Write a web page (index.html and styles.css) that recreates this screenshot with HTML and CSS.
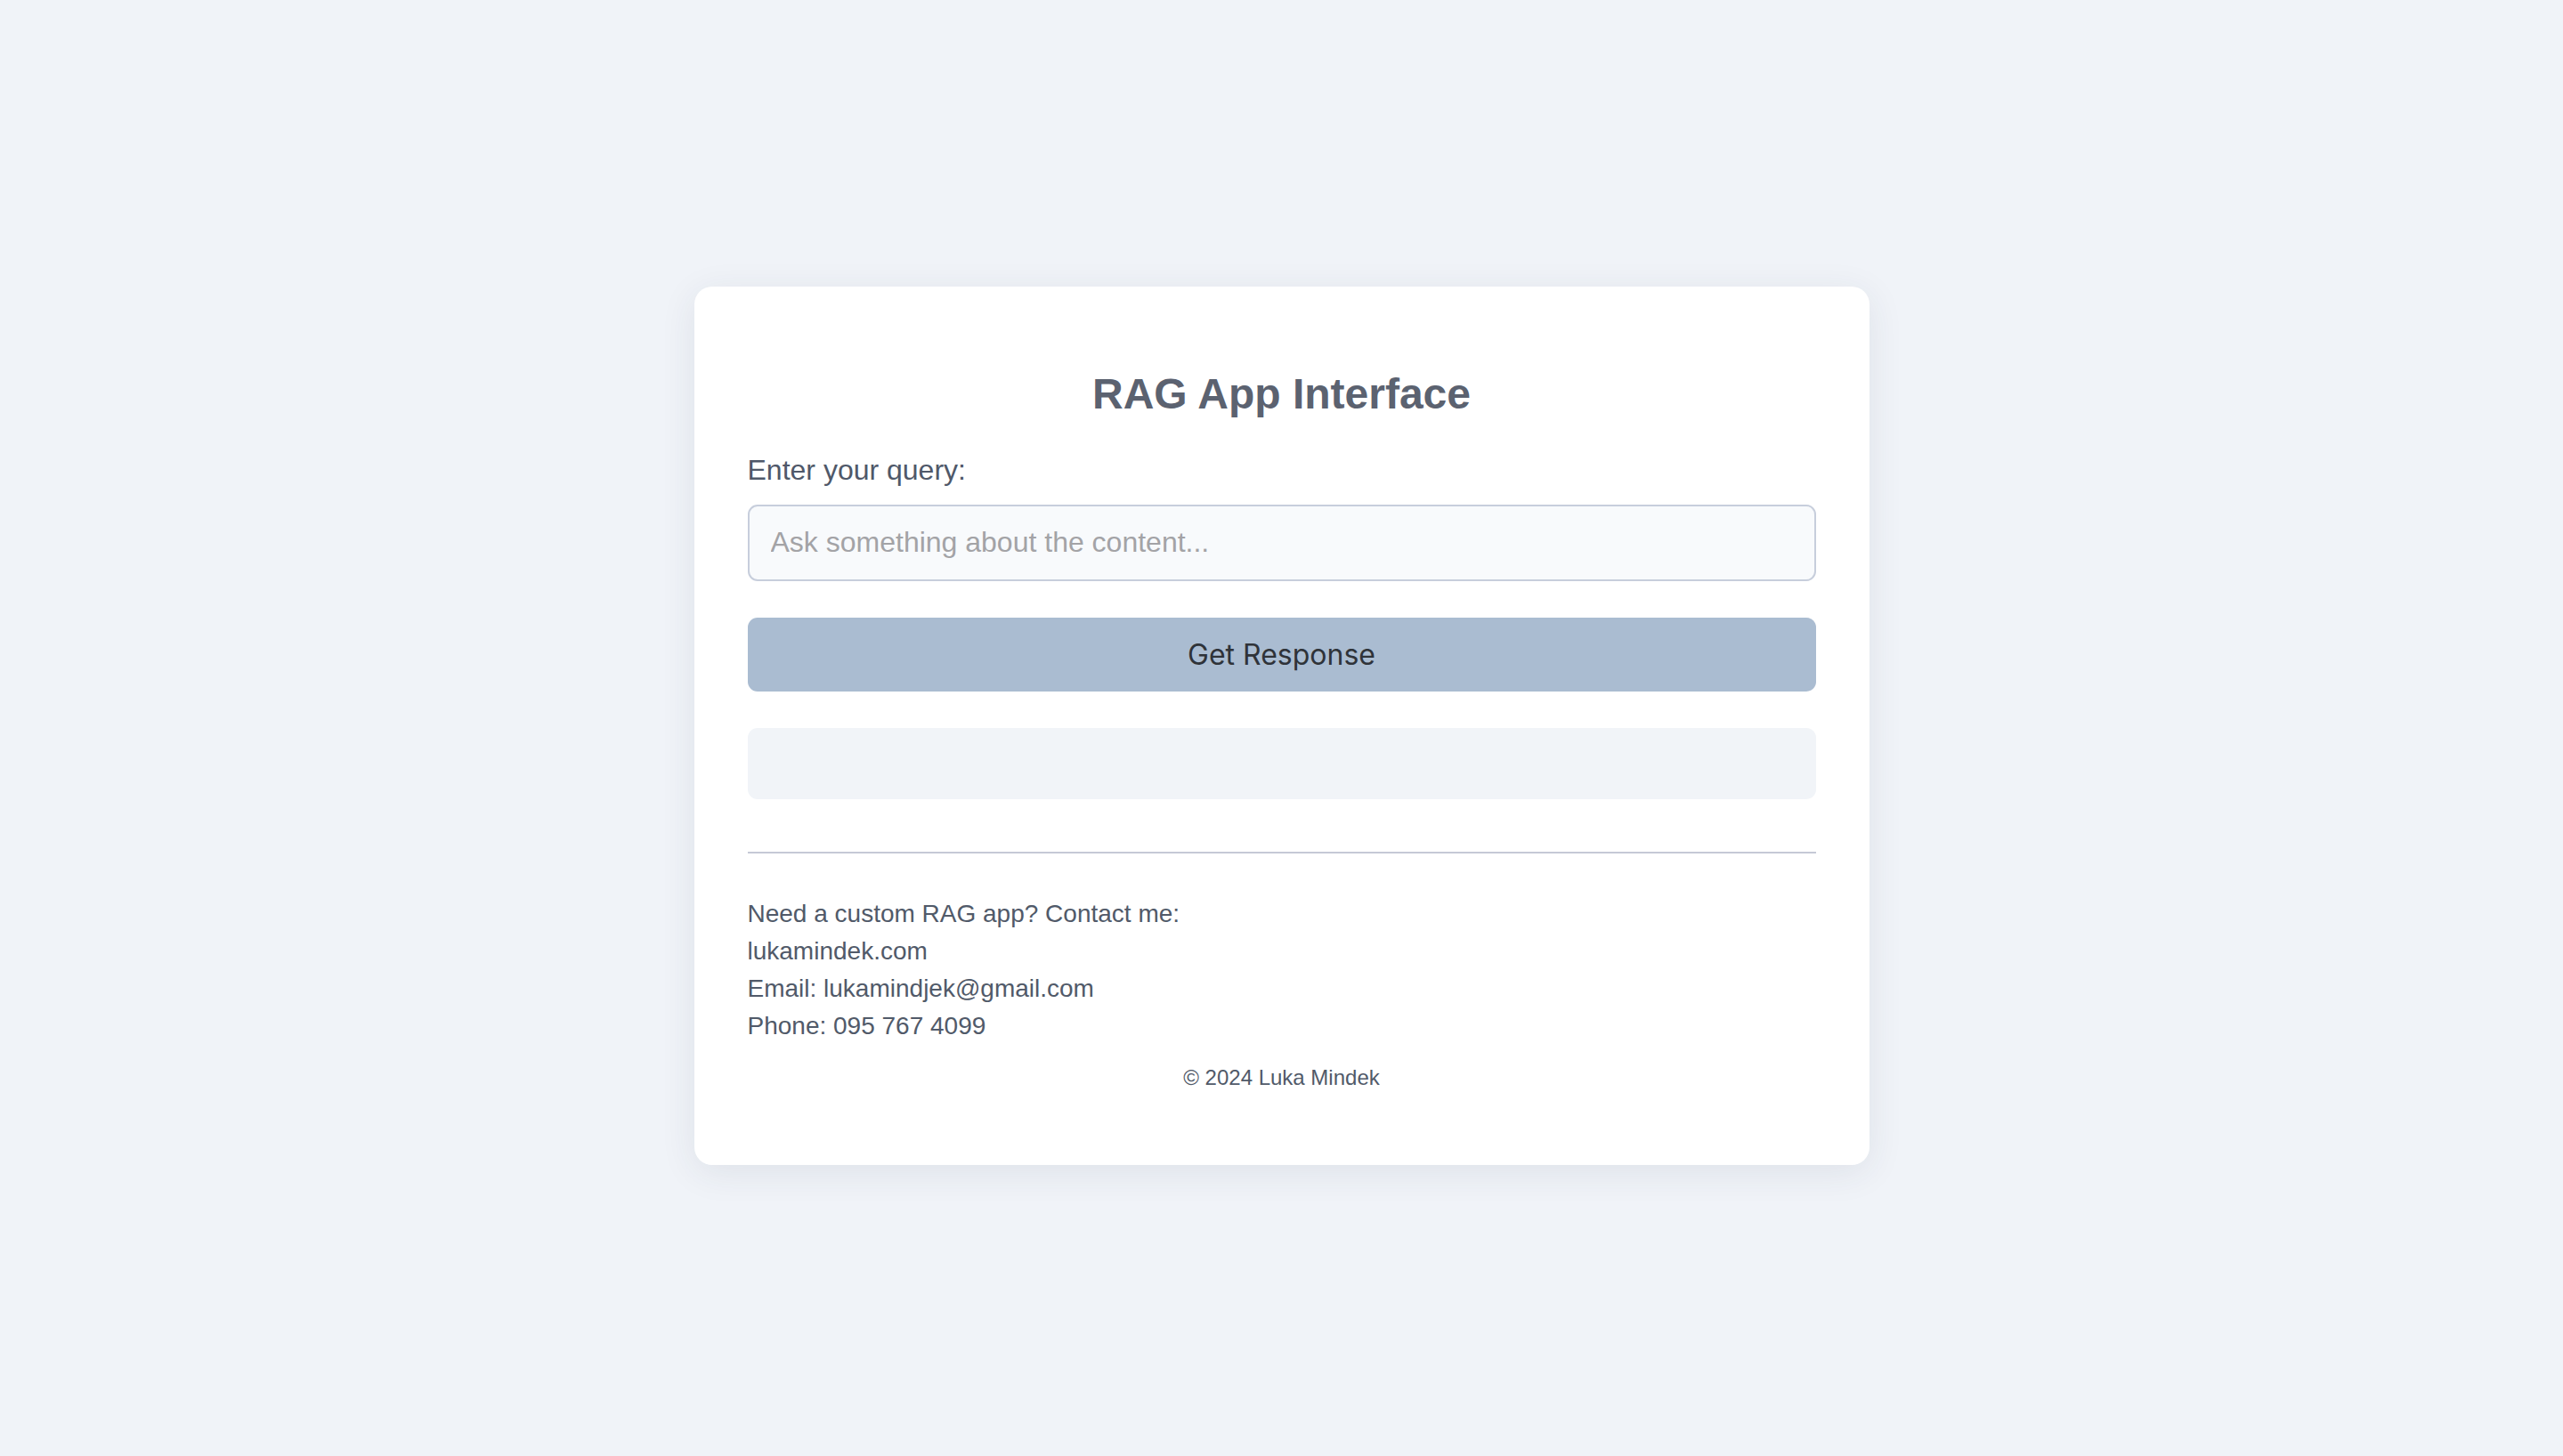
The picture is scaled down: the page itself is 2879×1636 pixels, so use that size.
FILE: index.html
```html
<!DOCTYPE html>
<html lang="en">
<head>
<meta charset="utf-8">
<title>RAG App Interface</title>
<link rel="stylesheet" href="styles.css">
</head>
<body>
<main class="card">
  <h1 class="title">RAG App Interface</h1>
  <label class="label" for="q">Enter your query:</label>
  <input class="query" id="q" type="text" placeholder="Ask something about the content...">
  <button class="submit" type="button">Get Response</button>
  <div class="response"></div>
  <hr class="divider">
  <div class="contact">
    <p>Need a custom RAG app? Contact me:</p>
    <p>lukamindek.com</p>
    <p>Email: lukamindjek@gmail.com</p>
    <p>Phone: 095 767 4099</p>
  </div>
  <p class="copy">© 2024 Luka Mindek</p>
</main>
</body>
</html>
```

FILE: styles.css
```css
html, body {
  margin: 0;
  padding: 0;
}
body {
  box-sizing: border-box;
  background: #f0f3f8;
  min-height: 100vh;
  padding-bottom: 6px;
  display: flex;
  align-items: center;
  justify-content: center;
  font-family: "Liberation Sans", Arial, sans-serif;
  color: #515a69;
}
.card {
  box-sizing: border-box;
  width: 1320px;
  background: #ffffff;
  border-radius: 20px;
  box-shadow: 0 8px 40px rgba(40, 55, 80, 0.09);
  padding: 93px 60px 84px;
  display: flex;
  flex-direction: column;
}
.title {
  margin: 0;
  font-size: 48px;
  line-height: 55px;
  font-weight: 700;
  text-align: center;
  color: #5b6270;
}
.label {
  margin-top: 40px;
  font-size: 32px;
  line-height: 37px;
  color: #4f5869;
}
.query {
  box-sizing: border-box;
  margin: 20px 0 0;
  width: 100%;
  height: 86px;
  padding: 0 24px;
  border: 2px solid #c7cedc;
  border-radius: 11px;
  background: #f8fafc;
  font-family: "Liberation Sans", Arial, sans-serif;
  font-size: 32px;
  color: #333;
  outline: none;
}
.query::placeholder {
  color: #a3a3a6;
}
.submit {
  margin-top: 41px;
  height: 83px;
  border: none;
  border-radius: 11px;
  background: #aabcd1;
  color: #2f3339;
  font-family: Inter, "Liberation Sans", sans-serif;
  font-size: 32px;
  padding: 0;
}
.response {
  margin-top: 41px;
  height: 80px;
  border-radius: 11px;
  background: #f1f4f8;
}
.divider {
  margin: 59px 0 0;
  border: none;
  height: 2px;
  background: #c5c9d6;
}
.contact {
  margin-top: 47px;
}
.contact p {
  margin: 0;
  font-size: 28px;
  line-height: 42px;
  color: #515a69;
}
.copy {
  margin: 23px 0 0;
  font-size: 24px;
  line-height: 28px;
  text-align: center;
  color: #515a69;
}
```
